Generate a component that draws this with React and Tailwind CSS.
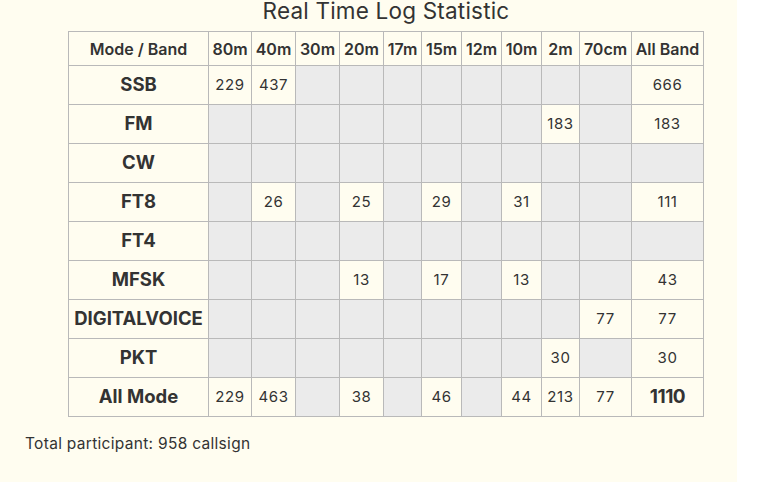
import React from 'react';

const bands = ['80m', '40m', '30m', '20m', '17m', '15m', '12m', '10m', '2m', '70cm', 'All Band'];

// one entry per band, null means no contact (grey cell)
const rows = [
  { mode: 'SSB', counts: [229, 437, null, null, null, null, null, null, null, null, 666] },
  { mode: 'FM', counts: [null, null, null, null, null, null, null, null, 183, null, 183] },
  { mode: 'CW', counts: [null, null, null, null, null, null, null, null, null, null, null] },
  { mode: 'FT8', counts: [null, 26, null, 25, null, 29, null, 31, null, null, 111] },
  { mode: 'FT4', counts: [null, null, null, null, null, null, null, null, null, null, null] },
  { mode: 'MFSK', counts: [null, null, null, 13, null, 17, null, 13, null, null, 43] },
  { mode: 'DIGITALVOICE', counts: [null, null, null, null, null, null, null, null, null, 77, 77] },
  { mode: 'PKT', counts: [null, null, null, null, null, null, null, null, 30, null, 30] },
  { mode: 'All Mode', counts: [229, 463, null, 38, null, 46, null, 44, 213, 77, 1110], total: true },
];

const Cell = ({ value, grand }) => {
  if (value == null) return <div className="bg-[#ebebeb]" />;
  return (
    <div
      className={`flex items-center justify-center bg-[#fffdf0] ${
        grand ? 'text-[19px] font-bold tracking-[-0.5px]' : 'text-[15px] tracking-[0.6px]'
      }`}
    >
      {value}
    </div>
  );
};

const App = () => {
  return (
    <div className="flex h-[482px] w-[768px] bg-white" style={{ fontFamily: 'Inter, "Noto Sans", sans-serif' }}>
      <div className="flex h-full w-[737px] flex-col bg-[#fffdf0] text-[#333]">
        <div className="ml-[68px] w-[636px]">
          <h1 className="mb-[9px] text-center text-[22.5px] leading-[22px] font-normal tracking-[0.2px] text-[#333]">
            Real Time Log Statistic
          </h1>
          <div className="grid grid-cols-[139px_42px_43px_43px_43px_37px_39px_39px_39px_37px_51px_71px] grid-rows-[33px_repeat(9,38px)] gap-px bg-[#b9b9b9] p-px">
            <div className="flex items-center justify-center bg-[#fffdf0] text-[16px] font-semibold">
              Mode / Band
            </div>
            {bands.map((b) => (
              <div key={b} className="flex items-center justify-center bg-[#fffdf0] text-[16px] font-semibold">
                {b}
              </div>
            ))}
            {rows.map((r) => (
              <React.Fragment key={r.mode}>
                <div className="flex items-center justify-center bg-[#fffdf0] text-[18.5px] font-bold">{r.mode}</div>
                {r.counts.map((c, i) => (
                  <Cell key={i} value={c} grand={r.total && i === r.counts.length - 1} />
                ))}
              </React.Fragment>
            ))}
          </div>
        </div>
        <p className="mt-[15px] ml-[25px] text-[15.5px] tracking-[0.3px] text-[#333]">Total participant: 958 callsign</p>
      </div>
    </div>
  );
};

export default App;
